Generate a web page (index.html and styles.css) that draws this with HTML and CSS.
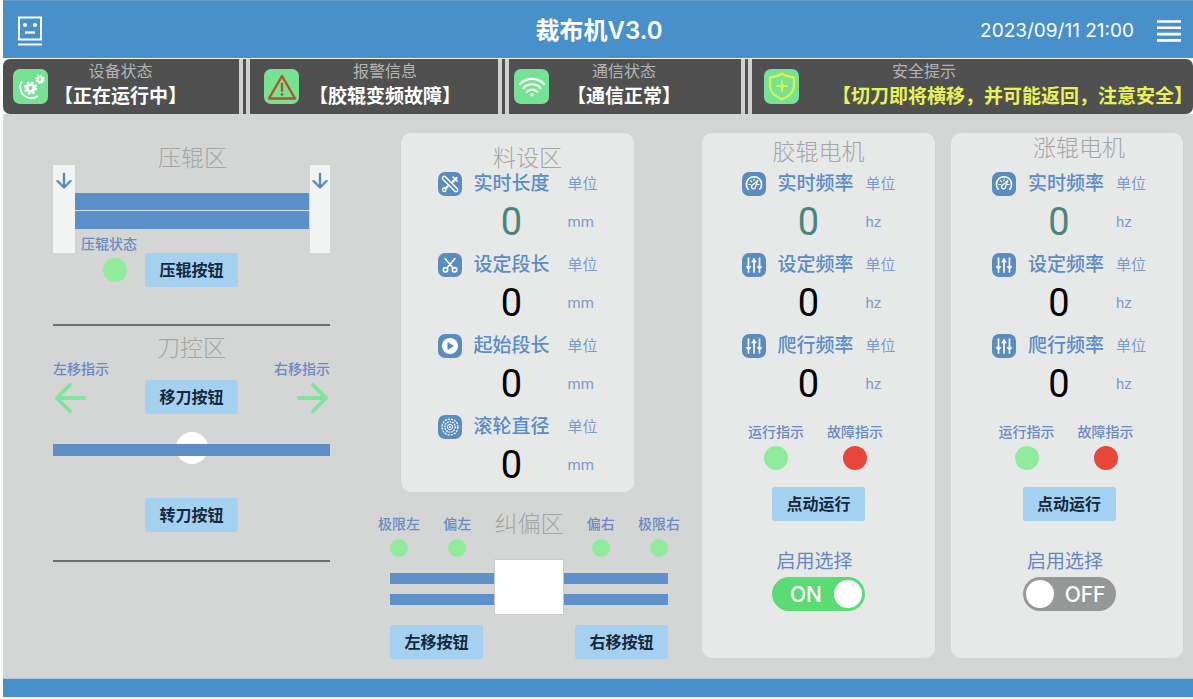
FILE: index.html
```html
<!DOCTYPE html>
<html lang="zh-CN">
<head>
  <meta charset="UTF-8">
  <meta name="viewport" content="width=device-width, initial-scale=1">
  <title>裁布机V3.0</title>
  <link rel="stylesheet" href="styles.css">
</head>
<body>
  <!-- 图标定义 -->
  <svg class="icon-defs" aria-hidden="true">
    <symbol id="icon-gauge" viewBox="0 0 24 24">
      <path d="M6.2 17.2a7.6 7.6 0 1 1 11.6 0" fill="none" stroke="#fff" stroke-width="1.6" stroke-linecap="round"/>
      <path d="M7 12.5h1.6M8.6 8.7l1 1M12 7v1.5M17 12.5h-1.6" stroke="#fff" stroke-width="1.2" stroke-linecap="round"/>
      <path d="M15.8 8.4l-2.3 6.4a2 2 0 1 1-3-1.7z" fill="none" stroke="#fff" stroke-width="1.3" stroke-linejoin="round"/>
    </symbol>
    <symbol id="icon-sliders" viewBox="0 0 24 24">
      <path d="M6.5 5v9M6.5 17v2M12 9v10M17.5 5v9M17.5 17v2" stroke="#fff" stroke-width="1.7" stroke-linecap="round"/>
      <path d="M4 13.5h5l-2.5 3.2zM15 13.5h5l-2.5 3.2zM9.6 9h4.8L12 5z" fill="#fff" stroke="#fff" stroke-width="0.6" stroke-linejoin="round"/>
    </symbol>
    <symbol id="icon-arrow" viewBox="0 0 34 34">
      <path d="M32 17H3M17 3L3 17l14 14" fill="none" stroke="currentColor" stroke-width="4" stroke-linecap="round" stroke-linejoin="round"/>
    </symbol>
    <symbol id="icon-down" viewBox="0 0 16 18">
      <path d="M8 2v13M1.5 9L8 15.5 14.5 9" fill="none" stroke="currentColor" stroke-width="2.4" stroke-linecap="round" stroke-linejoin="round"/>
    </symbol>
  </svg>

  <header class="header">
    <svg class="logo" viewBox="0 0 26 30" fill="none" stroke="#fff" stroke-width="2">
      <rect x="2" y="1.5" width="22" height="22"/>
      <circle cx="8" cy="9" r="2.1" fill="#fff" stroke="none"/>
      <circle cx="18" cy="9" r="2.1" fill="#fff" stroke="none"/>
      <path d="M8 16.5h10" stroke-width="2.2"/>
      <path d="M1 28.5h24"/>
    </svg>
    <h1 class="header-title">裁布机V3.0</h1>
    <div class="header-right">
      <time class="clock" datetime="2023-09-11T21:00">2023/09/11 21:00</time>
      <button class="menu-button" type="button" aria-label="菜单">
        <svg viewBox="0 0 24 22" width="24" height="22">
          <path d="M0 1.5h24M0 7.8h24M0 14.1h24M0 20.4h24" stroke="#fff" stroke-width="2.6"/>
        </svg>
      </button>
    </div>
  </header>

  <section class="status-bar">
    <div class="status">
      <svg class="status-icon" viewBox="0 0 35 35">
        <path d="M8.5 13a11 11 0 0 0 16 14.2" fill="none" stroke="#fff" stroke-width="1.8" stroke-linecap="round"/>
        <circle cx="17.5" cy="19" r="3.6" fill="none" stroke="#fff" stroke-width="3"/>
        <circle cx="17.5" cy="19" r="5.6" fill="none" stroke="#fff" stroke-width="2" stroke-dasharray="2.4 2"/>
        <circle cx="27" cy="10.5" r="2.4" fill="none" stroke="#fff" stroke-width="2"/>
        <circle cx="27" cy="10.5" r="3.9" fill="none" stroke="#fff" stroke-width="1.4" stroke-dasharray="1.7 1.36"/>
      </svg>
      <div class="status-text">
        <div class="status-label">设备状态</div>
        <div class="status-value">【正在运行中】</div>
      </div>
    </div>
    <span class="status-divider"></span>
    <div class="status status-alarm">
      <svg class="status-icon" viewBox="0 0 35 35">
        <path d="M18 7L31 29.5H5z" fill="none" stroke="#b4532a" stroke-width="2.4" stroke-linejoin="round"/>
        <path d="M18 14.5v7.5" stroke="#b4532a" stroke-width="2.2" stroke-linecap="round"/>
        <circle cx="18" cy="25.5" r="1.4" fill="#b4532a"/>
      </svg>
      <div class="status-text">
        <div class="status-label">报警信息</div>
        <div class="status-value">【胶辊变频故障】</div>
      </div>
    </div>
    <span class="status-divider"></span>
    <div class="status status-link">
      <svg class="status-icon" viewBox="0 0 35 35">
        <g fill="none" stroke="#fff" stroke-width="2.2" stroke-linecap="round">
          <path d="M6 15a16.5 16.5 0 0 1 24 0"/>
          <path d="M9.5 19a11.5 11.5 0 0 1 17 0"/>
          <path d="M13 22.7a6.8 6.8 0 0 1 10 0"/>
        </g>
        <circle cx="18" cy="25.8" r="1.7" fill="#fff"/>
      </svg>
      <div class="status-text">
        <div class="status-label">通信状态</div>
        <div class="status-value">【通信正常】</div>
      </div>
    </div>
    <span class="status-divider"></span>
    <div class="status status-safety">
      <svg class="status-icon" viewBox="0 0 35 35" fill="none" stroke="#dcf04c" stroke-width="2.2" stroke-linejoin="round">
        <path d="M18 4.5c3.5 2.5 7.5 3.6 12 3.8v8.5c0 6-4.500 10.500-12 13.500-7.500-3-12-7.500-12-13.500V8.300c4.500-.2 8.500-1.300 12-3.800z"/>
        <path d="M18 12v10M13 17h10" stroke-width="1.800" stroke-linecap="round"/>
        <path d="M18 13.500l1.400 2.100 2.100 1.400-2.100 1.400-1.400 2.100-1.400-2.100-2.100-1.400 2.100-1.400z" fill="#dcf04c" stroke="none"/>
      </svg>
      <div class="status-text">
        <div class="status-label">安全提示</div>
        <div class="status-value">【切刀即将横移，并可能返回，注意安全】</div>
      </div>
    </div>
  </section>

  <main class="main">
    <!-- 压辊区 / 刀控区 -->
    <div class="column-left">
      <section class="press">
        <div class="press-post"><svg class="post-arrow"><use href="#icon-down"/></svg></div>
        <div class="press-center">
          <h2 class="zone-title">压辊区</h2>
          <div class="press-rollers"></div>
          <span class="small-label">压辊状态</span>
        </div>
        <div class="press-post"><svg class="post-arrow"><use href="#icon-down"/></svg></div>
      </section>
      <div class="press-controls">
        <span class="dot"></span>
        <button class="button" type="button">压辊按钮</button>
      </div>
      <hr class="line">

      <section class="knife">
        <div class="knife-side">
          <span class="small-label">左移指示</span>
          <svg class="move-arrow"><use href="#icon-arrow"/></svg>
        </div>
        <div class="knife-center">
          <h2 class="zone-title">刀控区</h2>
          <button class="button" type="button">移刀按钮</button>
        </div>
        <div class="knife-side knife-side-right">
          <span class="small-label">右移指示</span>
          <svg class="move-arrow"><use href="#icon-arrow"/></svg>
        </div>
      </section>
      <div class="track">
        <span class="track-knob"></span>
        <span class="track-bar"></span>
      </div>
      <button class="button turn-button" type="button">转刀按钮</button>
      <hr class="line line-end">
    </div>

    <!-- 料设区 / 纠偏区 -->
    <div class="column-middle">
      <section class="panel material">
        <h2 class="zone-title">料设区</h2>
        <div class="params">
          <div class="param">
            <svg class="param-icon" viewBox="0 0 24 24" fill="none" stroke="#fff" stroke-linecap="round" stroke-linejoin="round">
              <path d="M7.300 4.800l12 12a1.700 1.700 0 0 1-2.400 2.400l-12-12a1.700 1.700 0 0 1 2.400-2.400z" stroke-width="1.400"/>
              <path d="M18.500 6l-3.800 3.800M9.500 14.500l-2 2" stroke-width="2.400"/>
              <path d="M15 5l4.200 4.200" stroke-width="1.400"/>
              <circle cx="6.300" cy="17.800" r="1.800" stroke-width="1.300"/>
            </svg>
            <span class="param-name">实时长度</span>
            <span class="param-unit">单位</span>
            <output class="param-value live">0</output>
            <span class="param-unit">mm</span>
          </div>
          <div class="param">
            <svg class="param-icon" viewBox="0 0 24 24" fill="none" stroke="#fff" stroke-width="1.6" stroke-linecap="round">
              <path d="M7 5.500l8 9.500M17 5.500L9 15"/>
              <circle cx="7.500" cy="16.800" r="2.200"/>
              <circle cx="16.500" cy="16.800" r="2.200"/>
            </svg>
            <span class="param-name">设定段长</span>
            <span class="param-unit">单位</span>
            <output class="param-value">0</output>
            <span class="param-unit">mm</span>
          </div>
          <div class="param">
            <svg class="param-icon" viewBox="0 0 24 24">
              <circle cx="12" cy="12" r="8" fill="#fff"/>
              <path d="M9.500 8v8l6.500-4z" fill="#5b87be"/>
            </svg>
            <span class="param-name">起始段长</span>
            <span class="param-unit">单位</span>
            <output class="param-value">0</output>
            <span class="param-unit">mm</span>
          </div>
          <div class="param">
            <svg class="param-icon" viewBox="0 0 24 24" fill="none" stroke="#fff">
              <circle cx="12" cy="12" r="8" stroke-width="1.200" stroke-dasharray="2.200 1"/>
              <circle cx="12" cy="12" r="5.200" stroke-width="1.300" stroke-dasharray="1.700 0.900"/>
              <circle cx="12" cy="12" r="2.600" stroke-width="1"/>
              <circle cx="12" cy="12" r="1" fill="#fff" stroke="none"/>
            </svg>
            <span class="param-name">滚轮直径</span>
            <span class="param-unit">单位</span>
            <output class="param-value">0</output>
            <span class="param-unit">mm</span>
          </div>
        </div>
      </section>

      <section class="align">
        <div class="align-lights">
          <div class="light"><span class="small-label">极限左</span><span class="dot dot-small"></span></div>
          <div class="light"><span class="small-label">偏左</span><span class="dot dot-small"></span></div>
          <h2 class="zone-title">纠偏区</h2>
          <div class="light"><span class="small-label">偏右</span><span class="dot dot-small"></span></div>
          <div class="light"><span class="small-label">极限右</span><span class="dot dot-small"></span></div>
        </div>
        <div class="align-track">
          <div class="rails"></div>
          <div class="align-block"></div>
          <div class="rails"></div>
        </div>
        <div class="align-buttons">
          <button class="button" type="button">左移按钮</button>
          <button class="button" type="button">右移按钮</button>
        </div>
      </section>
    </div>

    <!-- 胶辊电机 -->
    <section class="panel motor">
      <h2 class="zone-title">胶辊电机</h2>
      <div class="params">
        <div class="param">
          <svg class="param-icon"><use href="#icon-gauge"/></svg>
          <span class="param-name">实时频率</span>
          <span class="param-unit">单位</span>
          <output class="param-value live">0</output>
          <span class="param-unit">hz</span>
        </div>
        <div class="param">
          <svg class="param-icon"><use href="#icon-sliders"/></svg>
          <span class="param-name">设定频率</span>
          <span class="param-unit">单位</span>
          <output class="param-value">0</output>
          <span class="param-unit">hz</span>
        </div>
        <div class="param">
          <svg class="param-icon"><use href="#icon-sliders"/></svg>
          <span class="param-name">爬行频率</span>
          <span class="param-unit">单位</span>
          <output class="param-value">0</output>
          <span class="param-unit">hz</span>
        </div>
      </div>
      <div class="motor-lights">
        <div class="light"><span class="small-label">运行指示</span><span class="dot"></span></div>
        <div class="light"><span class="small-label">故障指示</span><span class="dot dot-red"></span></div>
      </div>
      <button class="button" type="button">点动运行</button>
      <label class="switch-label" for="rubberEnable">启用选择</label>
      <div class="switch">
        <input type="checkbox" id="rubberEnable" class="switch-input" checked>
        <span class="switch-on">ON</span>
        <span class="switch-off">OFF</span>
      </div>
    </section>

    <!-- 涨辊电机 -->
    <section class="panel motor motor-expand">
      <h2 class="zone-title">涨辊电机</h2>
      <div class="params">
        <div class="param">
          <svg class="param-icon"><use href="#icon-gauge"/></svg>
          <span class="param-name">实时频率</span>
          <span class="param-unit">单位</span>
          <output class="param-value live">0</output>
          <span class="param-unit">hz</span>
        </div>
        <div class="param">
          <svg class="param-icon"><use href="#icon-sliders"/></svg>
          <span class="param-name">设定频率</span>
          <span class="param-unit">单位</span>
          <output class="param-value">0</output>
          <span class="param-unit">hz</span>
        </div>
        <div class="param">
          <svg class="param-icon"><use href="#icon-sliders"/></svg>
          <span class="param-name">爬行频率</span>
          <span class="param-unit">单位</span>
          <output class="param-value">0</output>
          <span class="param-unit">hz</span>
        </div>
      </div>
      <div class="motor-lights">
        <div class="light"><span class="small-label">运行指示</span><span class="dot"></span></div>
        <div class="light"><span class="small-label">故障指示</span><span class="dot dot-red"></span></div>
      </div>
      <button class="button" type="button">点动运行</button>
      <label class="switch-label" for="expandEnable">启用选择</label>
      <div class="switch">
        <input type="checkbox" id="expandEnable" class="switch-input">
        <span class="switch-on">ON</span>
        <span class="switch-off">OFF</span>
      </div>
    </section>
  </main>

  <footer class="footer"></footer>
</body>
</html>
```
FILE: styles.css
```css
* {
  box-sizing: border-box;
}

body {
  display: flex;
  flex-direction: column;
  min-height: 100vh;
  margin: 0;
  padding: 0 0 2px 3px;
  background: #fbfdfc;
  font-family: Inter, "Noto Sans CJK SC", sans-serif;
}

h1, h2 {
  margin: 0;
}

.icon-defs {
  position: absolute;
  width: 0;
  height: 0;
}

/* 顶栏 */
.header {
  display: grid;
  grid-template-columns: 1fr auto 1fr;
  align-items: center;
  height: 58px;
  padding: 2px 12px 0 14px;
  background: #4790c9;
  border-top: 1px solid #6d9fc4;
  color: #fff;
}

.logo {
  width: 26px;
  height: 30px;
}

.header-title {
  font-size: 24px;
  font-weight: 600;
  line-height: 32px;
}

.header-right {
  display: flex;
  align-items: center;
  justify-content: flex-end;
  gap: 23px;
}

.clock {
  font-size: 19px;
  line-height: 24px;
}

.menu-button {
  display: flex;
  padding: 0;
  border: none;
  background: none;
  cursor: pointer;
}

/* 状态栏 */
.status-bar {
  display: grid;
  grid-template-columns: 236fr 11px 248fr 11px 232fr 11px 441fr;
  height: 55px;
  margin-top: 1px;
  background: #505050;
  border-radius: 7px;
  overflow: hidden;
}

.status {
  display: flex;
  align-items: flex-start;
  gap: 6px;
  padding-left: 10px;
  white-space: nowrap;
}

.status-alarm {
  gap: 10px;
  padding-left: 14px;
}

.status-link {
  gap: 18px;
  padding-left: 5px;
}

.status-safety {
  justify-content: space-between;
  padding-left: 12px;
}

.status-icon {
  flex: none;
  width: 35px;
  height: 35px;
  margin-top: 10px;
  background: #76e394;
  border-radius: 7px;
}

.status-text {
  text-align: center;
}

.status-label {
  font-size: 16px;
  line-height: 24px;
  color: #b4b4b4;
}

.status-value {
  font-size: 19px;
  font-weight: 600;
  line-height: 28px;
  color: #fff;
}

.status-safety .status-label {
  padding-left: 60px;
  text-align: left;
}

.status-safety .status-value {
  color: #e6f25a;
}

.status-divider {
  border: solid #cfd1d0;
  border-width: 0 4px;
}

/* 主体 */
.main {
  flex: 1;
  display: grid;
  grid-template-columns: 277fr 340fr 233fr 232fr;
  align-items: start;
  gap: 16px;
  padding: 19px 10px 19px 50px;
  background: #d4d6d5;
}

.column-left {
  display: flex;
  flex-direction: column;
  padding-top: 11px;
}

.column-middle {
  padding: 0 6px 0 32px;
}

.zone-title {
  font-size: 23px;
  font-weight: 300;
  line-height: 28px;
  color: #a3a5a5;
  text-align: center;
  white-space: nowrap;
}

.small-label {
  font-size: 14px;
  font-weight: 500;
  line-height: 18px;
  color: #6b8ac3;
  white-space: nowrap;
}

.button {
  width: 93px;
  height: 34px;
  padding: 0;
  border: none;
  border-radius: 3px;
  background: #a5d1f1;
  color: #14293b;
  font-family: inherit;
  font-size: 16px;
  font-weight: 600;
  line-height: 24px;
  cursor: pointer;
}

.button:hover {
  background: #93c6ec;
}

.dot {
  width: 24px;
  height: 24px;
  border-radius: 50%;
  background: #8fec9c;
}

.dot-small {
  width: 18px;
  height: 18px;
}

.dot-red {
  background: #e8463a;
}

.line {
  width: 100%;
  height: 2px;
  margin: 37px 0 8px;
  border: none;
  background: #6c6e6d;
}

.line-end {
  margin: 28px 0 0;
}

/* 压辊区 */
.press {
  display: grid;
  grid-template-columns: 22px 1fr 20px;
  align-items: end;
}

.press-post {
  display: flex;
  justify-content: center;
  height: 88px;
  padding-top: 7px;
  background: #f2f3f3;
}

.post-arrow {
  width: 16px;
  height: 18px;
  color: #5b8cc0;
}

.press-center {
  display: flex;
  flex-direction: column;
}

.press-rollers {
  height: 36px;
  margin: 21px 1px 6px 0;
  background: linear-gradient(#5b8fca 17px, #d8e6f4 17px, #d8e6f4 18px, #5b8fca 18px);
}

.press-center .small-label {
  padding-left: 6px;
}

.press-controls {
  display: grid;
  grid-template-columns: 1fr auto 1fr;
  align-items: center;
}

.press-controls .dot {
  justify-self: end;
  margin-right: 18px;
}

/* 刀控区 */
.knife {
  display: flex;
  justify-content: space-between;
  align-items: flex-end;
}

.knife-side {
  display: flex;
  flex-direction: column;
  align-items: flex-start;
  gap: 4px;
}

.knife-side-right {
  align-items: flex-end;
}

.knife-side-right .move-arrow {
  transform: scaleX(-1);
}

.move-arrow {
  width: 34px;
  height: 32px;
  color: #7fe59b;
}

.knife-center {
  display: flex;
  flex-direction: column;
  gap: 18px;
}

.track {
  display: grid;
  align-items: center;
  margin: 18px 0 34px;
}

.track-knob,
.track-bar {
  grid-area: 1 / 1;
}

.track-knob {
  justify-self: center;
  width: 32px;
  height: 32px;
  border-radius: 50%;
  background: #fff;
}

.track-bar {
  height: 12px;
  margin-top: 4px;
  background: #5f8dc6;
}

.turn-button {
  align-self: center;
}

/* 参数面板 */
.panel {
  background: #e7e9e9;
  border-radius: 10px;
}

.material {
  margin: 0 46px 0 23px;
  padding: 11px 0 5px;
}

.material .zone-title {
  padding-left: 20px;
}

.params {
  display: flex;
  flex-direction: column;
  align-items: center;
  gap: 9px;
}

.param {
  display: grid;
  grid-template-columns: 24px 76px 30px;
  grid-template-rows: 24px 44px;
  gap: 4px 12px;
  align-items: center;
}

.material .param {
  grid-template-columns: 24px 82px 30px;
}

.param-icon {
  width: 24px;
  height: 24px;
  border-radius: 7px;
  background: #5b8cc0;
}

.param-name {
  font-size: 19px;
  font-weight: 500;
  line-height: 24px;
  color: #5a8cc6;
  white-space: nowrap;
}

.param-unit {
  font-family: Roboto, "Noto Sans CJK SC", sans-serif;
  font-size: 15px;
  font-weight: 400;
  line-height: 24px;
  color: #7f9ac9;
}

.param-value {
  grid-column: 2;
  width: 76px;
  font-family: Roboto, sans-serif;
  font-size: 38px;
  line-height: 44px;
  color: #000;
  text-align: center;
}

.motor .param-value {
  width: 62px;
}

.param-value.live {
  color: #4c857c;
}

/* 纠偏区 */
.light {
  display: flex;
  flex-direction: column;
  align-items: center;
  gap: 6px;
}

.align-lights {
  display: flex;
  justify-content: space-between;
  align-items: flex-start;
  margin-top: 23px;
}

.align-lights .zone-title {
  line-height: 18px;
}

.align-track {
  display: grid;
  grid-template-columns: 1fr 70px 1fr;
  align-items: end;
  margin: 2px 12px 10px;
}

.rails {
  height: 32px;
  margin-bottom: 10px;
  border: solid #6090c9;
  border-width: 11px 0;
}

.align-block {
  height: 56px;
  background: #fff;
  border: 1px solid #c9cbca;
}

.align-buttons {
  display: flex;
  justify-content: space-between;
  padding: 0 12px;
}

/* 电机 */
.motor {
  display: flex;
  flex-direction: column;
  align-items: center;
  padding: 5px 0 47px;
}

.motor .zone-title {
  margin-bottom: 6px;
}

.motor-expand {
  padding: 1px 0 47px 4px;
}

.motor-expand .zone-title {
  margin-bottom: 10px;
  padding-left: 20px;
}

.motor-lights {
  display: flex;
  gap: 23px;
  margin: 17px 6px 17px 0;
}

.motor .light {
  gap: 5px;
}

.switch-label {
  margin: 27px 8px 1px 0;
  font-size: 19px;
  line-height: 28px;
  color: #6586c0;
}

.switch {
  display: grid;
  width: 93px;
  height: 34px;
  align-items: center;
  color: #fff;
  font-size: 21px;
  font-weight: 500;
}

.switch-input,
.switch-on,
.switch-off {
  grid-area: 1 / 1;
}

.switch-input {
  appearance: none;
  display: flex;
  align-items: center;
  width: 100%;
  height: 100%;
  margin: 0;
  padding: 0 3px;
  border-radius: 17px;
  background: #969797;
  cursor: pointer;
}

.switch-input::before {
  content: "";
  width: 28px;
  height: 28px;
  border-radius: 50%;
  background: #fff;
}

.switch-input:checked {
  justify-content: flex-end;
  background: #5bdb73;
}

.switch-on,
.switch-off {
  pointer-events: none;
}

.switch-on {
  display: none;
  padding-left: 18px;
}

.switch-off {
  justify-self: end;
  padding-right: 10px;
}

.switch-input:checked ~ .switch-on {
  display: block;
}

.switch-input:checked ~ .switch-off {
  display: none;
}

/* 底栏 */
.footer {
  height: 19px;
  background: #4790c9;
  border-top: 1px solid #a9cbe2;
}
```
